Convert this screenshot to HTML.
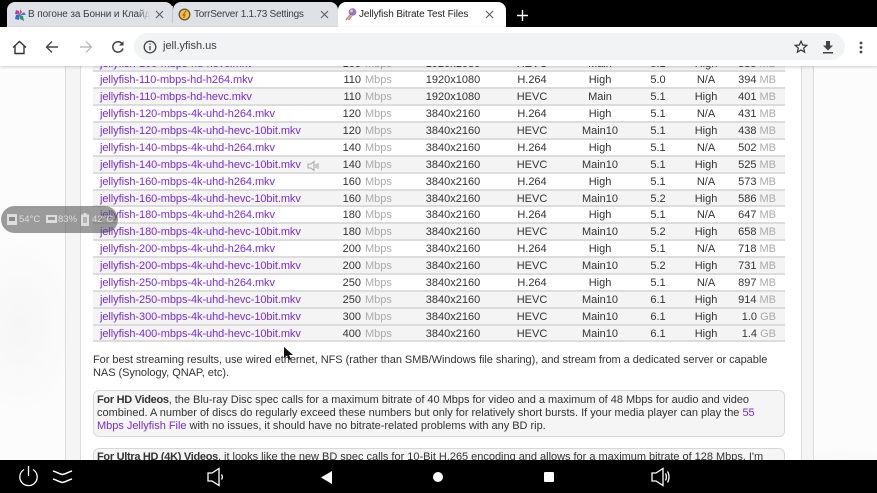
<!DOCTYPE html>
<html><head><meta charset="utf-8">
<style>
html,body{margin:0;padding:0}
body{width:877px;height:493px;position:relative;overflow:hidden;background:#fff;font-family:"Liberation Sans","Noto Sans CJK SC",sans-serif;color:#333;filter:blur(.3px)}
.abs{position:absolute}
#bg{left:0;top:66px;width:877px;height:394px;background:radial-gradient(ellipse 90px 60px at 840px 440px,#ececec,transparent),radial-gradient(ellipse 60px 90px at 20px 260px,#f6f6f6,transparent),#fcfcfc}
#strip{left:65px;top:66px;width:747px;height:394px;background:#f5f5f5;border-left:1px solid #dcdcdc;border-right:1px solid #dcdcdc}
#wrap{left:80px;top:66px;width:720px;height:394px;background:#fff;border-left:1px solid #dcdcdc;border-right:1px solid #dcdcdc}
#tb{left:93px;top:55.5px;width:692px;font-size:11px}
.r{height:14.89px;line-height:17px;border-bottom:2px solid #dcdcdc;position:relative;white-space:nowrap;color:#333}
.g{background:#f4f4f4}
.r span{position:absolute;top:0}
.f{left:7px;color:#7a2bd8;letter-spacing:-.07px}
.m{left:218px;width:50px;text-align:right}
.s i{font-style:normal;color:#aaa}
.m b{position:absolute;left:54px;top:0;font-weight:400;color:#aaa}
.c1{left:310px;width:100px;text-align:center}
.c2{left:399px;width:80px;text-align:center}
.c3{left:467px;width:80px;text-align:center}
.c4{left:535px;width:60px;text-align:center}
.c5{left:583px;width:60px;text-align:center}
.s{left:630px;width:53px;text-align:right}
.p{font-size:11px;line-height:13px;white-space:nowrap;color:#333;letter-spacing:-.02px}
.p b{letter-spacing:-.3px}
a{color:#7a2bd8;text-decoration:none}
.box{left:93px;width:690px;background:#f5f5f5;border:1px solid #d8d8d8;border-radius:6px}
#top{left:0;top:0;width:877px;height:27px;background:#000}
.tab{top:2px;height:25px;background:#dee1e6;border-radius:8px 8px 0 0}
.tt{top:8px;font-size:10px;line-height:14px;white-space:nowrap;color:#3c4043;overflow:hidden;letter-spacing:-.1px}
#toolbar{left:0;top:27px;width:877px;height:39px;background:#fff;box-shadow:0 1px 3px rgba(0,0,0,.2)}
#omni{left:134px;top:33px;width:711px;height:27px;background:#f1f3f4;border-radius:14px}
#nav{left:0;top:460px;width:877px;height:33px;background:#000}
#pill{left:1px;top:206px;width:117px;height:27px;background:rgba(85,85,85,.58);border-radius:14px;font-size:9.500px;color:#ddd}
#pill span{position:absolute;top:8px;line-height:12px}
</style></head>
<body>
<div class="abs" id="bg"></div>
<div class="abs" id="strip"></div>
<div class="abs" id="wrap"></div>

<div class="abs" id="tb">
<div class="r g"><span class="f">jellyfish-100-mbps-hd-hevc.mkv</span><span class="m">100<b>Mbps</b></span><span class="c1">1920x1080</span><span class="c2">HEVC</span><span class="c3">Main</span><span class="c4">5.1</span><span class="c5">High</span><span class="s">385 <i>MB</i></span></div>
<div class="r"><span class="f">jellyfish-110-mbps-hd-h264.mkv</span><span class="m">110<b>Mbps</b></span><span class="c1">1920x1080</span><span class="c2">H.264</span><span class="c3">High</span><span class="c4">5.0</span><span class="c5">N/A</span><span class="s">394 <i>MB</i></span></div>
<div class="r g"><span class="f">jellyfish-110-mbps-hd-hevc.mkv</span><span class="m">110<b>Mbps</b></span><span class="c1">1920x1080</span><span class="c2">HEVC</span><span class="c3">Main</span><span class="c4">5.1</span><span class="c5">High</span><span class="s">401 <i>MB</i></span></div>
<div class="r"><span class="f">jellyfish-120-mbps-4k-uhd-h264.mkv</span><span class="m">120<b>Mbps</b></span><span class="c1">3840x2160</span><span class="c2">H.264</span><span class="c3">High</span><span class="c4">5.1</span><span class="c5">N/A</span><span class="s">431 <i>MB</i></span></div>
<div class="r g"><span class="f">jellyfish-120-mbps-4k-uhd-hevc-10bit.mkv</span><span class="m">120<b>Mbps</b></span><span class="c1">3840x2160</span><span class="c2">HEVC</span><span class="c3">Main10</span><span class="c4">5.1</span><span class="c5">High</span><span class="s">438 <i>MB</i></span></div>
<div class="r"><span class="f">jellyfish-140-mbps-4k-uhd-h264.mkv</span><span class="m">140<b>Mbps</b></span><span class="c1">3840x2160</span><span class="c2">H.264</span><span class="c3">High</span><span class="c4">5.1</span><span class="c5">N/A</span><span class="s">502 <i>MB</i></span></div>
<div class="r g"><span class="f">jellyfish-140-mbps-4k-uhd-hevc-10bit.mkv</span><span class="m">140<b>Mbps</b></span><span class="c1">3840x2160</span><span class="c2">HEVC</span><span class="c3">Main10</span><span class="c4">5.1</span><span class="c5">High</span><span class="s">525 <i>MB</i></span>
<svg class="abs" style="left:214px;top:3px" width="14" height="12" viewBox="0 0 14 12" fill="none" stroke="#aaa" stroke-width="1.100"><path d="M1 4h3l3-2.500v9L4 8H1z"/><path d="M9 4v4M11 3v6"/></svg></div>
<div class="r"><span class="f">jellyfish-160-mbps-4k-uhd-h264.mkv</span><span class="m">160<b>Mbps</b></span><span class="c1">3840x2160</span><span class="c2">H.264</span><span class="c3">High</span><span class="c4">5.1</span><span class="c5">N/A</span><span class="s">573 <i>MB</i></span></div>
<div class="r g"><span class="f">jellyfish-160-mbps-4k-uhd-hevc-10bit.mkv</span><span class="m">160<b>Mbps</b></span><span class="c1">3840x2160</span><span class="c2">HEVC</span><span class="c3">Main10</span><span class="c4">5.2</span><span class="c5">High</span><span class="s">586 <i>MB</i></span></div>
<div class="r"><span class="f">jellyfish-180-mbps-4k-uhd-h264.mkv</span><span class="m">180<b>Mbps</b></span><span class="c1">3840x2160</span><span class="c2">H.264</span><span class="c3">High</span><span class="c4">5.1</span><span class="c5">N/A</span><span class="s">647 <i>MB</i></span></div>
<div class="r g"><span class="f">jellyfish-180-mbps-4k-uhd-hevc-10bit.mkv</span><span class="m">180<b>Mbps</b></span><span class="c1">3840x2160</span><span class="c2">HEVC</span><span class="c3">Main10</span><span class="c4">5.2</span><span class="c5">High</span><span class="s">658 <i>MB</i></span></div>
<div class="r"><span class="f">jellyfish-200-mbps-4k-uhd-h264.mkv</span><span class="m">200<b>Mbps</b></span><span class="c1">3840x2160</span><span class="c2">H.264</span><span class="c3">High</span><span class="c4">5.1</span><span class="c5">N/A</span><span class="s">718 <i>MB</i></span></div>
<div class="r g"><span class="f">jellyfish-200-mbps-4k-uhd-hevc-10bit.mkv</span><span class="m">200<b>Mbps</b></span><span class="c1">3840x2160</span><span class="c2">HEVC</span><span class="c3">Main10</span><span class="c4">5.2</span><span class="c5">High</span><span class="s">731 <i>MB</i></span></div>
<div class="r"><span class="f">jellyfish-250-mbps-4k-uhd-h264.mkv</span><span class="m">250<b>Mbps</b></span><span class="c1">3840x2160</span><span class="c2">H.264</span><span class="c3">High</span><span class="c4">5.1</span><span class="c5">N/A</span><span class="s">897 <i>MB</i></span></div>
<div class="r g"><span class="f">jellyfish-250-mbps-4k-uhd-hevc-10bit.mkv</span><span class="m">250<b>Mbps</b></span><span class="c1">3840x2160</span><span class="c2">HEVC</span><span class="c3">Main10</span><span class="c4">6.1</span><span class="c5">High</span><span class="s">914 <i>MB</i></span></div>
<div class="r g"><span class="f">jellyfish-300-mbps-4k-uhd-hevc-10bit.mkv</span><span class="m">300<b>Mbps</b></span><span class="c1">3840x2160</span><span class="c2">HEVC</span><span class="c3">Main10</span><span class="c4">6.1</span><span class="c5">High</span><span class="s">1.0 <i>GB</i></span></div>
<div class="r g"><span class="f">jellyfish-400-mbps-4k-uhd-hevc-10bit.mkv</span><span class="m">400<b>Mbps</b></span><span class="c1">3840x2160</span><span class="c2">HEVC</span><span class="c3">Main10</span><span class="c4">6.1</span><span class="c5">High</span><span class="s">1.4 <i>GB</i></span></div>
</div>

<div class="abs p" style="left:93px;top:354px;letter-spacing:-.045px">For best streaming results, use wired ethernet, NFS (rather than SMB/Windows file sharing), and stream from a dedicated server or capable<br>NAS (Synology, QNAP, etc).</div>

<div class="abs box" style="top:390px;height:45px"></div>
<div class="abs p" style="left:97px;top:394px"><b>For HD Videos</b>, the Blu-ray Disc spec calls for a maximum bitrate of 40 Mbps for video and a maximum of 48 Mbps for audio and video<br>combined. A number of discs do regularly exceed these numbers but only for relatively short bursts. If your media player can play the <a href="#">55</a><br><a href="#">Mbps Jellyfish File</a> with no issues, it should have no bitrate-related problems with any BD rip.</div>
<div class="abs box" style="top:448px;height:30px"></div>
<div class="abs p" style="left:97px;top:451px"><b>For Ultra HD (4K) Videos</b>, it looks like the new BD spec calls for 10-Bit H.265 encoding and allows for a maximum bitrate of 128 Mbps. I'm</div>

<svg class="abs" style="left:283px;top:346px" width="12" height="16" viewBox="0 0 12 16"><path d="M1 1v11l3-2.500 2 4.500 2-1-2-4h4z" fill="#111"/></svg>

<div class="abs" id="pill">
<svg class="abs" style="left:5px;top:7px" width="12" height="13" viewBox="0 0 12 13"><path d="M1 1h10v11H1z" fill="#ddd"/><path d="M3 4h6v4H3z" fill="#888"/></svg>
<span style="left:18px">54°C</span>
<svg class="abs" style="left:45px;top:8px" width="11" height="11" viewBox="0 0 11 11"><path d="M0 1h11v8H0z" fill="#ddd"/><path d="M2 3h7v3H2z" fill="#999"/></svg>
<span style="left:57px">83%</span>
<svg class="abs" style="left:80px;top:7px" width="8" height="13" viewBox="0 0 8 13"><path d="M2.500 0h3v1.500H8V13H0V1.500h2.500z" fill="#ddd"/><path d="M2 5h4M2 7h4M2 9h4" stroke="#888"/></svg>
<span style="left:91px">42°C</span>
</div>

<div class="abs" id="top"></div>
<div class="abs tab" style="left:7px;width:166px"></div>
<div class="abs tab" style="left:173px;width:165px"></div>
<div class="abs tab" style="left:338px;width:168px;background:#fff"></div>
<div class="abs" style="left:172px;top:6px;width:1px;height:17px;background:#c5c7cb"></div>

<svg class="abs" style="left:13px;top:8px" width="14" height="14" viewBox="0 0 14 14"><path d="M7 1l2 3-2 3z" fill="#e0463a"/><path d="M7 7l4-3 2 3z" fill="#3f7be0"/><path d="M7 7l3 1 1 5-4-2z" fill="#2a9d5c"/><path d="M7 7l-1 5-4-1 1-4z" fill="#2a70d8"/><path d="M7 7L2 6l1-4 3 1z" fill="#b33ea8"/></svg>
<div class="abs tt" style="left:28px;width:122px;-webkit-mask-image:linear-gradient(90deg,#000 90%,transparent)">В погоне за Бонни и Клайда</div>
<svg class="abs" style="left:155px;top:10px" width="9" height="9" viewBox="0 0 9 9" stroke="#5f6368" stroke-width="1.200"><path d="M1 1l7 7M8 1l-7 7"/></svg>

<svg class="abs" style="left:178px;top:8px" width="13" height="13" viewBox="0 0 13 13"><circle cx="6.500" cy="6.500" r="5.300" fill="#f5c242" stroke="#6b5a3a" stroke-width="1.400"/><path d="M8 3L5 7h2l-1.500 3" fill="none" stroke="#b5651d" stroke-width="1.200"/></svg>
<div class="abs tt" style="left:194px;letter-spacing:-.25px">TorrServer 1.1.73 Settings</div>
<svg class="abs" style="left:320px;top:10px" width="9" height="9" viewBox="0 0 9 9" stroke="#5f6368" stroke-width="1.200"><path d="M1 1l7 7M8 1l-7 7"/></svg>

<svg class="abs" style="left:344px;top:7px" width="14" height="15" viewBox="0 0 14 15"><circle cx="8.500" cy="5" r="3.800" fill="#9a6fc0"/><circle cx="7.500" cy="4" r="1.500" fill="#d9c6ea"/><path d="M6 8l-4 5M7.500 9l-3 4" stroke="#c58a7a" stroke-width="1.500"/></svg>
<div class="abs tt" style="left:359px;color:#222">Jellyfish Bitrate Test Files</div>
<svg class="abs" style="left:485px;top:10px" width="9" height="9" viewBox="0 0 9 9" stroke="#5f6368" stroke-width="1.200"><path d="M1 1l7 7M8 1l-7 7"/></svg>
<svg class="abs" style="left:517px;top:10px" width="11" height="11" viewBox="0 0 11 11" stroke="#fff" stroke-width="1.400"><path d="M5.500 0v11M0 5.500h11"/></svg>

<div class="abs" id="toolbar"></div>
<div class="abs" id="omni"></div>
<svg class="abs" style="left:12px;top:40px" width="15" height="15" viewBox="0 0 15 15" fill="none" stroke="#333" stroke-width="1.400"><path d="M1 7.500L7.500 1.500 14 7.500M3 6v7.500h9V6"/></svg>
<svg class="abs" style="left:45px;top:40px" width="14" height="14" viewBox="0 0 14 14" fill="none" stroke="#444" stroke-width="1.400"><path d="M13 7H1.500M7 1.500L1.500 7 7 12.500"/></svg>
<svg class="abs" style="left:79px;top:40px" width="14" height="14" viewBox="0 0 14 14" fill="none" stroke="#bbb" stroke-width="1.400"><path d="M1 7h11.500M7 1.500L12.500 7 7 12.500"/></svg>
<svg class="abs" style="left:111px;top:40px" width="14" height="14" viewBox="0 0 14 14" fill="none" stroke="#444" stroke-width="1.500"><path d="M12 8.500A5.200 5.200 0 1 1 10.700 3.200"/><path d="M12.500 1v4.500H8" fill="#444" stroke="none"/></svg>
<svg class="abs" style="left:143px;top:40px" width="14" height="14" viewBox="0 0 14 14" fill="none" stroke="#444" stroke-width="1.300"><circle cx="7" cy="7" r="5.800"/><path d="M7 6v4.200M7 3.500v1.300"/></svg>
<div class="abs" style="left:163px;top:39px;font-size:11px;line-height:15px;color:#3c4043">jell.yfish.us</div>
<svg class="abs" style="left:794px;top:40px" width="14" height="14" viewBox="0 0 14 14" fill="none" stroke="#333" stroke-width="1.200"><path d="M7 1.200l1.700 3.800 4.100.4-3.100 2.700.9 4-3.600-2.100-3.600 2.100.9-4L1.200 5.400l4.100-.4z"/></svg>
<svg class="abs" style="left:822px;top:41px" width="12" height="13" viewBox="0 0 12 13" fill="#444"><path d="M4 0h4v4.500h3L6 9.500 1 4.500h3zM1 11h10v1.500H1z"/></svg>
<svg class="abs" style="left:859px;top:40px" width="4" height="14" viewBox="0 0 4 14" fill="#444"><circle cx="2" cy="3" r="1.400"/><circle cx="2" cy="7.500" r="1.400"/><circle cx="2" cy="12" r="1.400"/></svg>

<div class="abs" id="nav"></div>
<svg class="abs" style="left:18px;top:465px" width="21" height="23" viewBox="0 0 21 23" fill="none" stroke="#fff" stroke-width="1.300"><path d="M6 4.500a8.700 8.700 0 1 0 9 0M10.500 1v10"/></svg>
<svg class="abs" style="left:52px;top:470px" width="21" height="15" viewBox="0 0 21 15" fill="none" stroke="#fff" stroke-width="1.500"><path d="M1 1c4 1 6 3 9.500 3.500C14 4 16 2 20 1M1 9c4 1 6 3 9.500 3.500C14 12 16 10 20 9"/></svg>
<svg class="abs" style="left:207px;top:467px" width="17" height="20" viewBox="0 0 17 20" fill="none" stroke="#fff" stroke-width="1.300"><path d="M1 6h4l7-4.500v17L5 14H1z"/><path d="M14.500 7.500c1 1.500 1 3.500 0 5"/></svg>
<svg class="abs" style="left:321px;top:471px" width="11" height="13" viewBox="0 0 11 13" fill="#fff"><path d="M11 0v13L0 6.500z"/></svg>
<div class="abs" style="left:433px;top:472px;width:10px;height:10px;border-radius:50%;background:#fff"></div>
<div class="abs" style="left:544px;top:472px;width:10px;height:10px;border-radius:1px;background:#fff"></div>
<svg class="abs" style="left:651px;top:467px" width="19" height="20" viewBox="0 0 19 20" fill="none" stroke="#fff" stroke-width="1.300"><path d="M1 6h4l7-4.500v17L5 14H1z"/><path d="M14.500 6.500c1.200 2 1.200 5 0 7M16.500 4.500c2 3 2 8 0 11"/></svg>
</body></html>
